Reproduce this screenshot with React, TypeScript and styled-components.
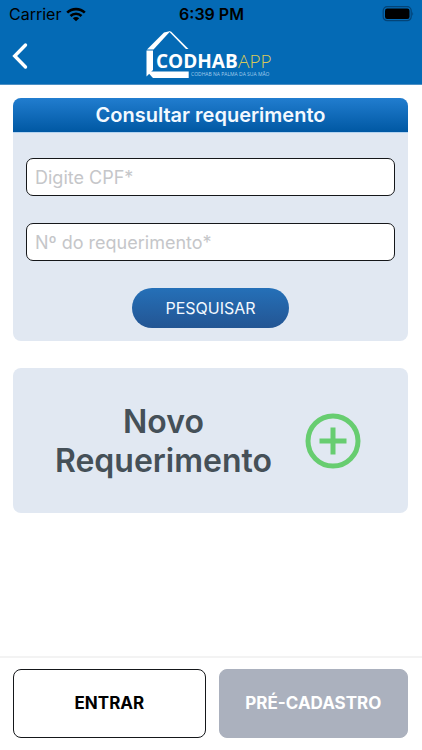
import React from "react";
import styled, { createGlobalStyle } from "styled-components";

const GlobalStyle = createGlobalStyle`
  *, *::before, *::after { box-sizing: border-box; }
  body { margin: 0; background: #fff; }
  button, input { font: inherit; margin: 0; }
`;

const Screen = styled.div`
  min-height: 100vh;
  display: flex;
  flex-direction: column;
  font-family: Inter, "Liberation Sans", sans-serif;
  color: #000;
`;

const Header = styled.header`
  background: #046ab5;
  border-bottom: 1px solid #4c8fc4;
`;

const StatusBar = styled.div`
  display: grid;
  grid-template-columns: 1fr auto 1fr;
  align-items: center;
  height: 28px;
  padding: 0 8px 0 9px;
  font-size: 16px;
  line-height: 20px;
`;

const Carrier = styled.span`
  display: flex;
  align-items: center;
  gap: 5px;
`;

const Clock = styled.span`
  font-weight: 600;
`;

const Battery = styled.svg`
  justify-self: end;
`;

const NavBar = styled.div`
  display: grid;
  grid-template-columns: 1fr auto 1fr;
  align-items: center;
  height: 56px;
  padding: 0 8px;
`;

const BackButton = styled.button`
  display: flex;
  justify-self: start;
  padding: 0;
  border: 0;
  background: none;
  cursor: pointer;
`;

const Main = styled.main`
  flex: 1;
  display: flex;
  flex-direction: column;
  gap: 27px;
  padding: 13px 14px 27px 13px;
`;

const SearchCard = styled.form`
  border-radius: 8px;
  overflow: hidden;
  background: #e1e8f2;
`;

const CardTitle = styled.h1`
  margin: 0;
  padding: 5px 8px;
  background: linear-gradient(#217dcf, #0058a3);
  border-bottom: 1px solid #b4d3f0;
  color: #f3f9ff;
  font-size: 20px;
  line-height: 24px;
  font-weight: 600;
  text-align: center;
`;

const Fields = styled.div`
  display: flex;
  flex-direction: column;
  gap: 27px;
  padding: 25px 13px 13px;
`;

const Field = styled.input`
  width: 100%;
  height: 38px;
  padding: 0 8px;
  border: 1px solid #15171a;
  border-radius: 7px;
  background: #fff;
  font-size: 18px;
  line-height: 24px;
  &::placeholder { color: #c5c6c9; opacity: 1; }
`;

const SearchButton = styled.button`
  align-self: center;
  padding: 8px 33px;
  border: 0;
  border-radius: 20px;
  background: linear-gradient(#2570b8, #235593);
  color: #f3f9ff;
  font-size: 16px;
  line-height: 24px;
  cursor: pointer;
`;

const NewRequest = styled.button`
  display: flex;
  align-items: center;
  justify-content: center;
  gap: 33px;
  padding: 34px 45px 33px 40px;
  border: 0;
  border-radius: 8px;
  background: #e1e8f2;
  color: #455058;
  font-size: 32px;
  line-height: 39px;
  font-weight: 600;
  cursor: pointer;
`;

const NewRequestLabel = styled.span`
  width: min-content;
`;

const Footer = styled.footer`
  display: flex;
  gap: 13px;
  padding: 11px 14px 12px 13px;
  border-top: 2px solid #f3f3f3;
`;

const FooterButton = styled.button<{ $muted?: boolean }>`
  flex: ${(p) => (p.$muted ? 50 : 51)} 1 0;
  padding: 22px 8px;
  border: 1px solid ${(p) => (p.$muted ? "#abb1be" : "#15171a")};
  border-radius: 8px;
  background: ${(p) => (p.$muted ? "#abb1be" : "#fff")};
  color: ${(p) => (p.$muted ? "#fff" : "#000")};
  font-size: 17px;
  line-height: 23px;
  font-weight: 700;
  cursor: pointer;
`;

function WifiIcon() {
  return (
    <svg width="20" height="15" viewBox="0 0 20 15" aria-hidden="true">
      <g fill="none" stroke="#000" strokeWidth="2.6">
        <path d="M1.2 5.6C6 .9 14 .9 18.8 5.6" />
        <path d="M4.5 9C7.5 6 12.5 6 15.5 9" />
      </g>
      <path d="M10 14.3 6.8 11.2C8.6 9.6 11.4 9.6 13.2 11.2Z" fill="#000" />
    </svg>
  );
}

function BatteryIcon() {
  return (
    <Battery width="32" height="16" viewBox="0 0 32 16" aria-hidden="true">
      <rect x="1.2" y="0.7" width="28" height="14" rx="4" fill="none" stroke="#034478" strokeWidth="1.2" />
      <rect x="3" y="2.5" width="24.5" height="10.5" rx="2.2" fill="#000" />
      <path d="M30.3 5.5q1.7 2.2 0 4.5z" fill="#034478" />
    </Battery>
  );
}

function Logo() {
  return (
    <svg width="134" height="52" viewBox="144 30 134 52" role="img" aria-label="CODHAB APP">
      <g fill="#fff">
        <path d="M147 49.500 164 32.500 170.500 31 153.500 49.500Z" />
        <path d="M169 31.500 171 31.500 188.500 49H186Z" />
        <path d="M146.500 50.500H153V70L146.500 76.500Z" />
        <path d="M147 71.500H188.700V78H153Z" />
      </g>
      <text x="156" y="68" fill="#fff" fontFamily="'Open Sans', sans-serif" fontWeight="700" fontSize="19">CODHAB</text>
      <text x="238" y="68" fill="#d8c95a" fontFamily="'Open Sans', sans-serif" fontWeight="300" fontSize="19">APP</text>
      <text x="191" y="76" fill="#a3cdec" fontFamily="'Open Sans', sans-serif" fontSize="5">CODHAB NA PALMA DA SUA MÃO</text>
    </svg>
  );
}

export default function App() {
  return (
    <Screen>
      <GlobalStyle />
      <Header>
        <StatusBar>
          <Carrier>
            Carrier
            <WifiIcon />
          </Carrier>
          <Clock>6:39 PM</Clock>
          <BatteryIcon />
        </StatusBar>
        <NavBar>
          <BackButton type="button" aria-label="Voltar">
            <svg width="24" height="28" viewBox="0 0 24 28" fill="none" stroke="#fff" strokeWidth="3.4" strokeLinecap="round" strokeLinejoin="miter" aria-hidden="true">
              <path d="M17.5 3 6.7 14 17.5 25" />
            </svg>
          </BackButton>
          <Logo />
        </NavBar>
      </Header>
      <Main>
        <SearchCard onSubmit={(e) => e.preventDefault()}>
          <CardTitle>Consultar requerimento</CardTitle>
          <Fields>
            <Field type="text" inputMode="numeric" placeholder="Digite CPF*" aria-label="Digite CPF" />
            <Field type="text" placeholder="Nº do requerimento*" aria-label="Nº do requerimento" />
            <SearchButton type="submit">PESQUISAR</SearchButton>
          </Fields>
        </SearchCard>
        <NewRequest type="button">
          <NewRequestLabel>Novo Requerimento</NewRequestLabel>
          <svg width="56" height="56" viewBox="0 0 56 56" fill="none" stroke="#67cd70" strokeWidth="5" aria-hidden="true">
            <circle cx="28" cy="28" r="25" />
            <path d="M28 14.5V41.5M14.5 28H41.5" />
          </svg>
        </NewRequest>
      </Main>
      <Footer>
        <FooterButton type="button">ENTRAR</FooterButton>
        <FooterButton type="button" $muted>PRÉ-CADASTRO</FooterButton>
      </Footer>
    </Screen>
  );
}
